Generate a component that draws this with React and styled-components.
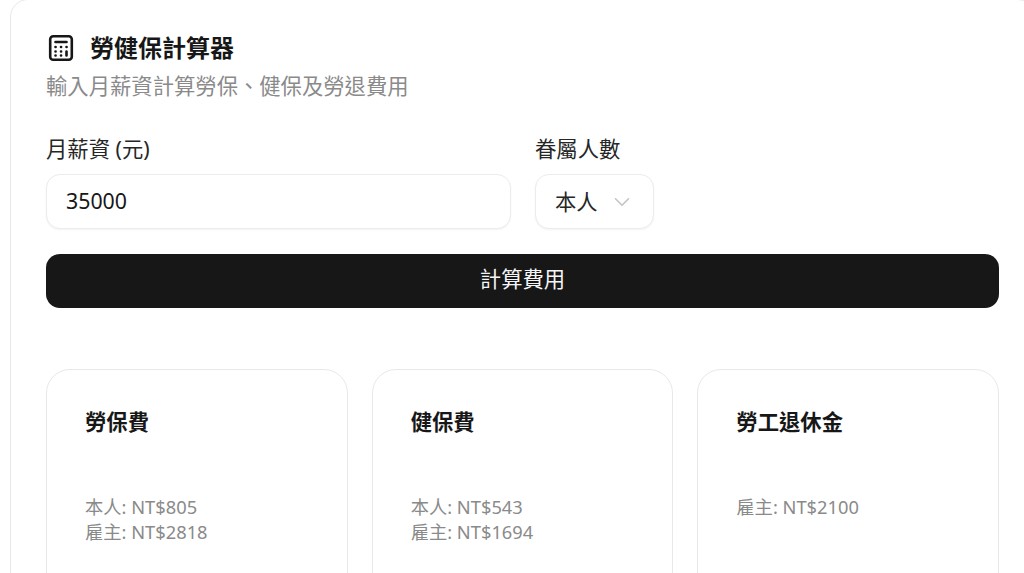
import React from "react";
import styled, { createGlobalStyle } from "styled-components";
import { ChevronDown } from "lucide-react";

const GlobalStyle = createGlobalStyle`
  html, body {
    margin: 0;
    height: 100%;
    overflow: hidden;
    background: #fff;
  }
  body {
    font-family: "Noto Sans", "Noto Sans CJK TC", sans-serif;
    color: #171717;
  }
`;

const Page = styled.div`
  padding-left: 10px;
  width: 1060px;
  box-sizing: border-box;
`;

const Panel = styled.section`
  box-sizing: border-box;
  width: 1025px;
  margin-top: -1px;
  padding: 33px 35px 0;
  background: #fff;
  border: 1px solid #e8e8e8;
  border-radius: 18px;
`;

const Title = styled.h1`
  display: flex;
  align-items: center;
  gap: 16px;
  margin: 0 0 0 2px;
  height: 30px;
  font-size: 24px;
  font-weight: 700;
  line-height: 30px;
`;

const Subtitle = styled.p`
  margin: 8px 0 0;
  font-size: 21.33px;
  line-height: 30px;
  color: #8a8a8a;
`;

const FormRow = styled.div`
  display: flex;
  gap: 24px;
  margin-top: 33px;
`;

const Field = styled.div`
  display: flex;
  flex-direction: column;
  gap: 10px;
  width: ${(p) => p.$width}px;
`;

const Label = styled.label`
  font-size: 21.33px;
  line-height: 30px;
  color: #262626;
`;

const Input = styled.input`
  box-sizing: border-box;
  width: 100%;
  height: 55px;
  padding: 0 19px 3px;
  border: 1px solid #ececec;
  border-radius: 14px;
  box-shadow: 0 1px 2px rgba(0, 0, 0, 0.05);
  font: inherit;
  font-size: 21.33px;
  color: #171717;
  outline: none;
`;

const Select = styled.button`
  box-sizing: border-box;
  display: flex;
  align-items: center;
  gap: 11px;
  width: 119px;
  height: 55px;
  padding: 0 19px;
  background: #fff;
  border: 1px solid #ececec;
  border-radius: 14px;
  box-shadow: 0 1px 2px rgba(0, 0, 0, 0.05);
  font: inherit;
  font-size: 21.33px;
  color: #262626;
  white-space: nowrap;
  svg {
    color: #c4c4c4;
    flex: none;
  }
`;

const SelectValue = styled.span`
  margin-bottom: 3px;
`;

const SubmitButton = styled.button`
  display: block;
  width: 100%;
  height: 54px;
  margin-top: 25px;
  padding: 0 0 8px;
  background: #171717;
  border: 0;
  border-radius: 14px;
  font: inherit;
  font-size: 21.33px;
  color: #f5f5f5;
`;

const Results = styled.div`
  display: grid;
  grid-template-columns: repeat(3, 1fr);
  gap: 24px;
  margin-top: 61px;
`;

const ResultCard = styled.article`
  box-sizing: border-box;
  height: 240px;
  padding: 37px 38px;
  border: 1px solid #e8e8e8;
  border-radius: 24px;
`;

const CardTitle = styled.h2`
  margin: 0;
  font-size: 21.33px;
  font-weight: 700;
  line-height: 30px;
`;

const CardBody = styled.div`
  margin-top: 57px;
  font-size: 18.3px;
  line-height: 25px;
  color: #8a8a8a;
`;

const CalculatorIcon = () => (
  <svg
    width="26"
    height="28"
    viewBox="0 0 26 28"
    fill="none"
    stroke="#171717"
    strokeWidth="2.6"
    strokeLinecap="round"
  >
    <rect x="2.2" y="2.2" width="21.6" height="23.6" rx="3" />
    <path d="M7.5 8h11" />
    <path d="M7.5 13h.1M13 13h.1M18.5 13h.1M7.5 17.5h.1M13 17.5h.1M7.5 21.5h.1M13 21.5h.1M18.5 17.5v4" />
  </svg>
);

const results = [
  { title: "勞保費", lines: ["本人: NT$805", "雇主: NT$2818"] },
  { title: "健保費", lines: ["本人: NT$543", "雇主: NT$1694"] },
  { title: "勞工退休金", lines: ["雇主: NT$2100"] },
];

const App = () => {
  return (
    <Page>
      <GlobalStyle />
      <Panel>
        <Title>
          <CalculatorIcon />
          勞健保計算器
        </Title>
        <Subtitle>輸入月薪資計算勞保、健保及勞退費用</Subtitle>
        <FormRow>
          <Field $width={465}>
            <Label>月薪資 (元)</Label>
            <Input defaultValue="35000" />
          </Field>
          <Field $width={119}>
            <Label>眷屬人數</Label>
            <Select>
              <SelectValue>本人</SelectValue>
              <ChevronDown size={26} strokeWidth={1.5} />
            </Select>
          </Field>
        </FormRow>
        <SubmitButton>計算費用</SubmitButton>
        <Results>
          {results.map((item) => (
            <ResultCard key={item.title}>
              <CardTitle>{item.title}</CardTitle>
              <CardBody>
                {item.lines.map((line) => (
                  <div key={line}>{line}</div>
                ))}
              </CardBody>
            </ResultCard>
          ))}
        </Results>
      </Panel>
    </Page>
  );
};

export default App;
